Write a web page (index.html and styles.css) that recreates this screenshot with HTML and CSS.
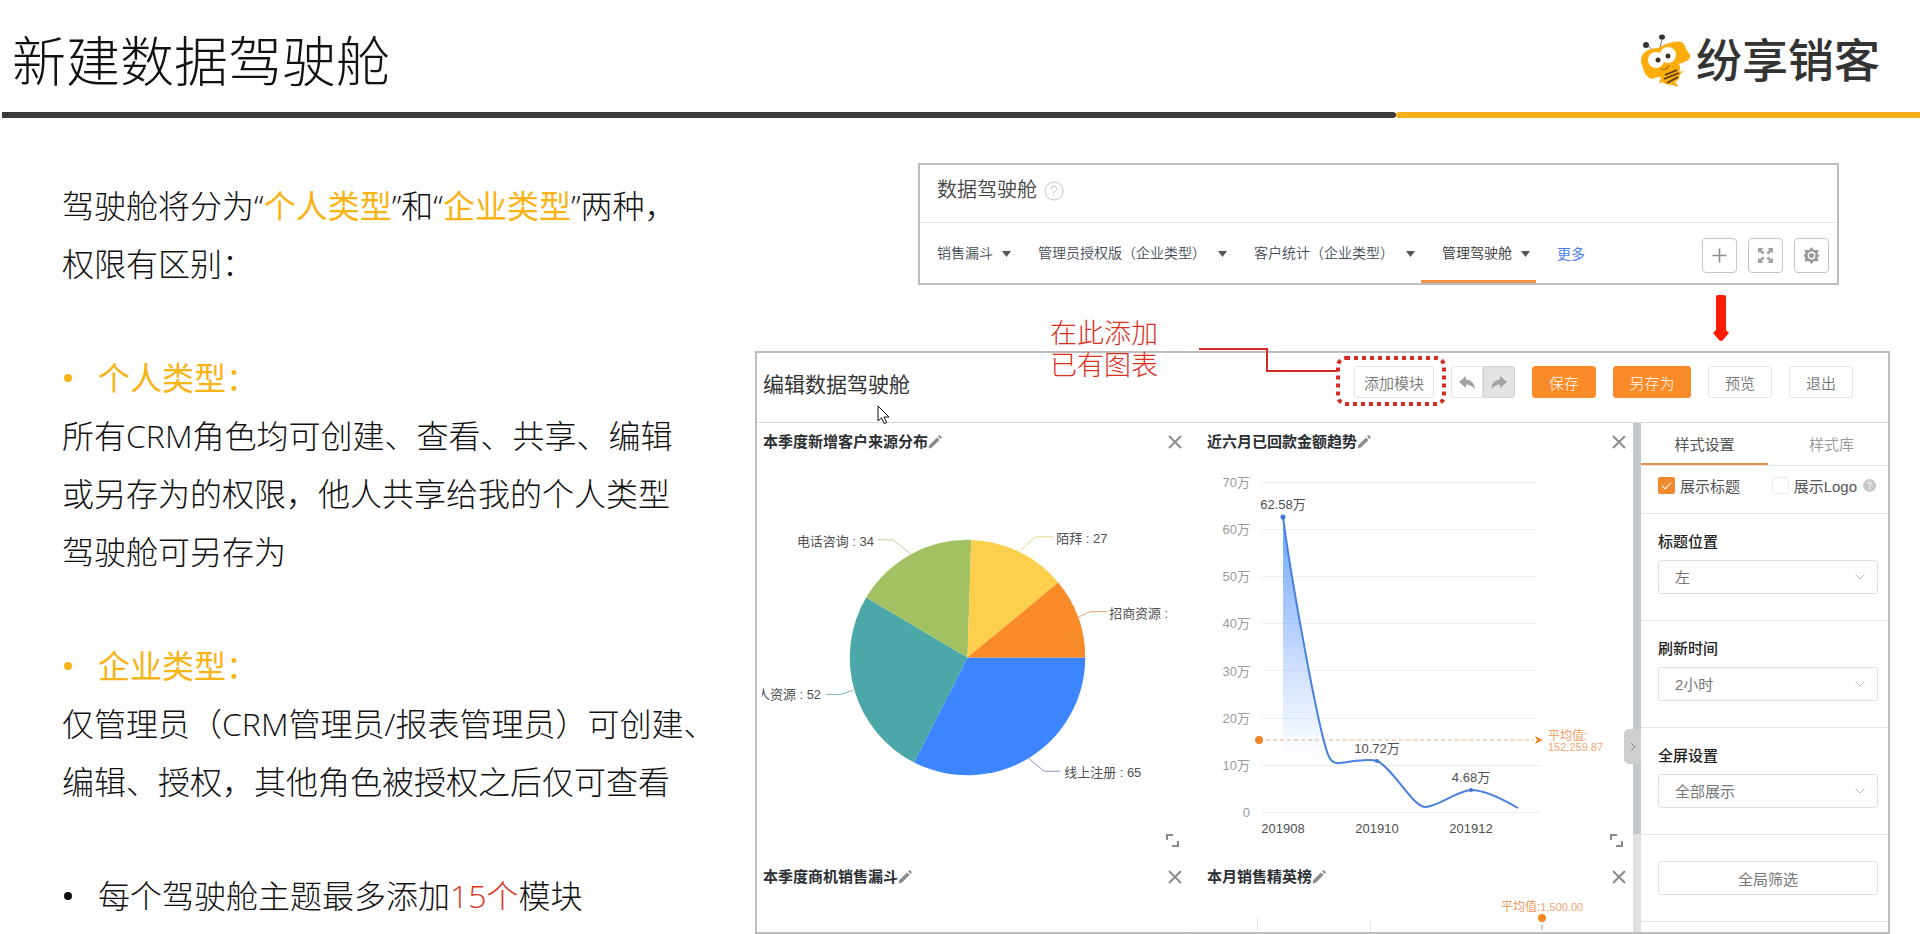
FILE: index.html
```html
<!DOCTYPE html>
<html lang="zh-CN">
<head>
<meta charset="utf-8">
<meta name="viewport" content="width=device-width, initial-scale=1">
<title>新建数据驾驶舱</title>
<link rel="stylesheet" href="styles.css">
</head>
<body>
<svg class="sprite" aria-hidden="true">
  <symbol id="pencil" viewBox="0 0 14 14"><path d="M0.5 13.5 1.4 10 9 2.4 11.6 5 4 12.6Z M10 1.4 11.2 0.3Q11.7 0 12.2 0.4L13.6 1.8Q14 2.3 13.6 2.8L12.6 4Z"/></symbol>
  <symbol id="close" viewBox="0 0 14 14"><path d="M1 1 13 13M13 1 1 13"/></symbol>
  <symbol id="resize" viewBox="0 0 13 13"><path d="M1 6V1H7M12 7V12H6"/></symbol>
  <symbol id="caret" viewBox="0 0 9 6"><path d="M0 0H9L4.5 6Z"/></symbol>
  <symbol id="chevron" viewBox="0 0 10 6"><path d="M0.5 0.5 5 5 9.5 0.5"/></symbol>
</svg>

<header class="slide-head">
  <h1>新建数据驾驶舱</h1>
  <div class="brand">
    <svg class="bee" viewBox="0 0 50 54" aria-hidden="true">
      <path d="M7 12 13 17M21 5 19 14" fill="none" stroke="#777" stroke-width="1"/>
      <ellipse cx="5" cy="11" rx="3" ry="3" fill="#333"/>
      <ellipse cx="21" cy="3" rx="3" ry="2.6" fill="#333"/>
      <path d="M4 18Q10 14 17 14Q27 8 37 7.500Q41 7 43 10Q45 16 49 21Q50 24 46 27L38 30Q40 34 38 38L43 37 39 40 38 45Q35 47 34 49L37 51 36 53 32 51Q25 51 21 48L18 50 20 43Q14 43 11 45Q5 43 3 37L0 28Q0 21 4 18Z" fill="#fcac0b"/>
      <circle cx="15" cy="26" r="8" fill="#fff"/>
      <circle cx="27" cy="21" r="8" fill="#fff"/>
      <circle cx="17" cy="26" r="2.500" fill="#3a2f22"/>
      <circle cx="27" cy="22" r="2.500" fill="#3a2f22"/>
      <path d="M20 35Q25 37 28 31" fill="none" stroke="#a86a12" stroke-width="1.200"/>
      <path d="M24 41 36 36M23 45 38 39M26 49 37 43" stroke="#5a3a0c" stroke-width="1.800"/>
    </svg>
    <span>纷享销客</span>
  </div>
</header>
<div class="rule"><span></span><span></span></div>

<main class="slide">
  <section class="notes">
    <p>驾驶舱将分为“<b>个人类型</b>”和“<b>企业类型</b>”两种，<br>权限有区别：</p>
    <div>
      <ul class="gold"><li>个人类型：</li></ul>
      <p>所有CRM角色均可创建、查看、共享、编辑<br>或另存为的权限，他人共享给我的个人类型<br>驾驶舱可另存为</p>
    </div>
    <div>
      <ul class="gold"><li>企业类型：</li></ul>
      <p>仅管理员（CRM管理员/报表管理员）可创建、<br>编辑、授权，其他角色被授权之后仅可查看</p>
    </div>
    <ul><li>每个驾驶舱主题最多添加<em>15个</em>模块</li></ul>
  </section>

  <div class="shots">
    <section class="cockpit">
      <div class="cockpit-head">
        <h2>数据驾驶舱</h2>
        <svg class="help" viewBox="0 0 20 20" aria-hidden="true"><circle cx="10" cy="10" r="9"/><path d="M7.300 8Q7.300 5.300 10 5.300T12.700 7.800Q12.700 9.200 11.200 10Q10 10.600 10 12M10 13.500V15"/></svg>
      </div>
      <div class="cockpit-bar">
        <nav class="tabs">
          <button type="button">销售漏斗<svg class="caret"><use href="#caret"/></svg></button>
          <button type="button" class="typed">管理员授权版（企业类型）<svg class="caret"><use href="#caret"/></svg></button>
          <button type="button" class="typed">客户统计（企业类型）<svg class="caret"><use href="#caret"/></svg></button>
          <button type="button" class="on">管理驾驶舱<svg class="caret"><use href="#caret"/></svg></button>
          <a href="#more">更多</a>
        </nav>
        <div class="tools">
          <button type="button" aria-label="添加"><svg viewBox="0 0 18 18"><path d="M9 1.500V16.500M1.500 9H16.500" fill="none" stroke="#8d8d8d" stroke-width="1.700"/></svg></button>
          <button type="button" aria-label="全屏"><svg viewBox="0 0 18 18"><path d="M1 1H7L5 3 8 6 6 8 3 5 1 7ZM17 1V7L15 5 12 8 10 6 13 3 11 1ZM1 17V11L3 13 6 10 8 12 5 15 7 17ZM17 17H11L13 15 10 12 12 10 15 13 17 11Z" fill="#a2a2a2"/></svg></button>
          <button type="button" aria-label="设置"><svg viewBox="0 0 18 18"><path d="M9 0 11.500 3.200H16.500L15.300 7 17.500 9.200 15.300 11.500 16.500 15H11.500L9 18 6.500 15H1.500L2.700 11.500 0.500 9.200 2.700 7 1.500 3.200H6.500Z" fill="#999"/><circle cx="9" cy="9" r="3.400" fill="none" stroke="#fff" stroke-width="1.500"/></svg></button>
        </div>
      </div>
    </section>

    <svg class="arrow" viewBox="0 0 16 46" aria-hidden="true"><path d="M3 2Q3 0 5 0H11Q13 0 13 2V35L16 38 10 45Q8 47 6 45L0 38 3 35Z" fill="#fb1c05"/></svg>

    <section class="editor">
      <div class="editor-head">
        <h2>编辑数据驾驶舱</h2>
        <svg class="pointer" viewBox="0 0 13 20" aria-hidden="true"><path d="M1 1V16L4.500 12.800 7.200 18.700 9.600 17.600 7 12H12Z" fill="#fff" stroke="#111" stroke-width="1"/></svg>
        <div class="actions">
          <div class="marked">
            <button type="button" class="add">添加模块</button>
            <p class="callout">在此添加<br>已有图表</p>
            <svg class="marker" viewBox="0 0 247 58" aria-hidden="true">
              <path d="M0 1H68V23H138" stroke-width="2"/>
              <rect x="139" y="10" width="106" height="46" rx="8" stroke-width="4" stroke-dasharray="4 4"/>
            </svg>
          </div>
          <div class="history">
            <button type="button" aria-label="撤销"><svg viewBox="0 0 16 13"><path d="M0 6 7 0V3.500Q15 4 16 13Q12 8.500 7 8.500V12Z"/></svg></button>
            <button type="button" aria-label="重做"><svg viewBox="0 0 16 13"><path d="M16 6 9 0V3.500Q1 4 0 13Q4 8.500 9 8.500V12Z"/></svg></button>
          </div>
          <button type="button" class="primary">保存</button>
          <button type="button" class="primary wide">另存为</button>
          <button type="button">预览</button>
          <button type="button">退出</button>
        </div>
      </div>

      <div class="editor-body">
        <div class="tiles">
          <article class="tile">
            <header><h3>本季度新增客户来源分布</h3><svg class="pencil"><use href="#pencil"/></svg><button type="button" aria-label="关闭"><svg><use href="#close"/></svg></button></header>
            <svg class="chart" viewBox="0 0 433 397" role="img" aria-label="本季度新增客户来源分布">
              <path d="M211 197L329 197A118 118 0 0 1 157.400 302.100Z" fill="#3d85fe"/>
              <path d="M211 197L157.400 302.100A118 118 0 0 1 109.400 136.900Z" fill="#4ba7a8"/>
              <path d="M211 197L109.400 136.900A118 118 0 0 1 214.700 79.100Z" fill="#a1c162"/>
              <path d="M211 197L214.700 79.100A118 118 0 0 1 301.900 121.800Z" fill="#fccf4d"/>
              <path d="M211 197L301.900 121.800A118 118 0 0 1 329 197Z" fill="#f88a28"/>
              <g fill="none">
                <path d="M121 79H136L154 93" stroke="#b9cf90"/>
                <path d="M264 90 279 76H297" stroke="#e8d591"/>
                <path d="M321 157 334 151H351" stroke="#dba274"/>
                <path d="M69 234H84L96 230" stroke="#7cbabb"/>
                <path d="M272 298 288 311H304" stroke="#8793c4"/>
              </g>
              <clipPath id="edge"><rect x="5" y="220" width="70" height="30"/></clipPath>
              <g class="label">
                <text x="40" y="85">电话咨询 : 34</text>
                <text x="300" y="82">陌拜 : 27</text>
                <text x="353" y="157">招商资源 :</text>
                <text x="0" y="239" clip-path="url(#edge)">人资源 : 52</text>
                <text x="308" y="317">线上注册 : 65</text>
              </g>
            </svg>
            <svg class="resize"><use href="#resize"/></svg>
          </article>

          <article class="tile">
            <header><h3>近六月已回款金额趋势</h3><svg class="pencil"><use href="#pencil"/></svg><button type="button" aria-label="关闭"><svg><use href="#close"/></svg></button></header>
            <svg class="chart" viewBox="0 0 443 397" role="img" aria-label="近六月已回款金额趋势">
              <linearGradient id="fade" x1="0" y1="56" x2="0" y2="351" gradientUnits="userSpaceOnUse">
                <stop offset="0" stop-color="#5a9bfb" stop-opacity="0.900"/>
                <stop offset="0.350" stop-color="#84b1fb" stop-opacity="0.650"/>
                <stop offset="0.700" stop-color="#b9d3fa" stop-opacity="0.300"/>
                <stop offset="0.850" stop-color="#eaf2fd" stop-opacity="0"/>
              </linearGradient>
              <path d="M72 21.500H346M72 68.500H346M72 115.500H346M72 162.500H346M72 209.500H346M72 257.500H346M72 304.500H351M72 351.500H351" stroke="#ededee"/>
              <path d="M93 56C100 110 124 245 135 284C139 300 143 303 150 302V351H93Z" fill="url(#fade)"/>
              <path d="M69 279H344" stroke="#e9b181" stroke-dasharray="4 3"/>
              <circle cx="69" cy="279" r="4" fill="#f08629"/>
              <path d="M345 275 353 279 345 283 347 279Z" fill="#f08629"/>
              <path d="M93 56C100 110 124 245 135 284C139 300 143 303 150 302C162 301 176 297 187 300C202 306 222 345 235 346C248 346 266 330 281 329C295 329 316 340 328 347" fill="none" stroke="#4a80e0" stroke-width="2"/>
              <g fill="#3e76de"><circle cx="93" cy="56" r="2.500"/><circle cx="187" cy="300" r="2"/><circle cx="281" cy="329" r="2"/></g>
              <g class="axis">
                <text x="60" y="26">70万</text><text x="60" y="73">60万</text><text x="60" y="120">50万</text><text x="60" y="167">40万</text>
                <text x="60" y="215">30万</text><text x="60" y="262">20万</text><text x="60" y="309">10万</text><text x="60" y="356">0</text>
              </g>
              <g class="label mid">
                <text x="93" y="48">62.58万</text><text x="187" y="292">10.72万</text><text x="281" y="321">4.68万</text>
                <text x="93" y="372">201908</text><text x="187" y="372">201910</text><text x="281" y="372">201912</text>
              </g>
              <g class="avg"><text x="358" y="279">平均值:</text><text x="358" y="290" class="num">152,259.87</text></g>
            </svg>
            <svg class="resize"><use href="#resize"/></svg>
          </article>

          <article class="tile">
            <header><h3>本季度商机销售漏斗</h3><svg class="pencil"><use href="#pencil"/></svg><button type="button" aria-label="关闭"><svg><use href="#close"/></svg></button></header>
          </article>

          <article class="tile">
            <header><h3>本月销售精英榜</h3><svg class="pencil"><use href="#pencil"/></svg><button type="button" aria-label="关闭"><svg><use href="#close"/></svg></button></header>
            <svg class="chart" viewBox="0 0 443 36" role="img" aria-label="本月销售精英榜">
              <path d="M67.500 22V35M180.500 26V35" stroke="#e4e4e4"/>
              <path d="M352 29V36" stroke="#999" stroke-dasharray="5 2"/>
              <circle cx="352" cy="22" r="4" fill="#f08629"/>
              <g class="avg"><text x="311" y="15">平均值:<tspan class="num">1,500.00</tspan></text></g>
            </svg>
          </article>
        </div>

        <div class="gutter">
          <button type="button" class="fold" aria-label="收起"><svg viewBox="0 0 6 10"><path d="M1 1 5 5 1 9"/></svg></button>
        </div>

        <aside class="settings">
          <div class="settings-tabs"><button type="button" class="on">样式设置</button><button type="button">样式库</button></div>
          <div class="checks">
            <label><input type="checkbox" checked>展示标题</label>
            <label><input type="checkbox">展示Logo</label>
            <svg class="hint" viewBox="0 0 13 13" aria-hidden="true"><circle cx="6.500" cy="6.500" r="6.500" fill="#c9c9c9"/><path d="M4.700 5Q4.800 3.300 6.500 3.300T8.200 5Q8.200 6 6.500 7V8M6.500 9V10" fill="none" stroke="#fff"/></svg>
          </div>
          <div class="field">
            <label for="pos">标题位置</label>
            <div class="pick"><select id="pos"><option>左</option></select><svg><use href="#chevron"/></svg></div>
          </div>
          <div class="field">
            <label for="refresh">刷新时间</label>
            <div class="pick"><select id="refresh"><option>2小时</option></select><svg><use href="#chevron"/></svg></div>
          </div>
          <div class="field">
            <label for="full">全屏设置</label>
            <div class="pick"><select id="full"><option>全部展示</option></select><svg><use href="#chevron"/></svg></div>
          </div>
          <div class="filter"><button type="button">全局筛选</button></div>
        </aside>
      </div>
    </section>
  </div>
</main>
</body>
</html>
```
FILE: styles.css
```css
* { box-sizing: border-box; }

body {
  margin: 0;
  min-height: 100vh;
  display: flex;
  flex-direction: column;
  background: #fefefe;
  color: #111;
  font-family: "Liberation Sans", "Noto Sans CJK SC", sans-serif;
}

h1, h2, h3, p, ul { margin: 0; padding: 0; }
h2 { font-weight: 400; }
button, select, input { font: inherit; margin: 0; }
button { padding: 0; background: #fff; border: 0; cursor: pointer; }
svg { display: block; }
.sprite { position: absolute; width: 0; height: 0; }

/* Slide heading */
.slide-head {
  display: flex;
  justify-content: space-between;
  align-items: center;
  height: 112px;
  padding: 10px 40px 0 12px;
}
.slide-head h1 {
  font: 300 54px/72px "Open Sans", "Noto Sans CJK SC", sans-serif;
}
.brand {
  display: flex;
  align-items: center;
  gap: 5px;
  color: #333;
  font-size: 46px;
  font-weight: 500;
  line-height: 54px;
}
.bee { width: 50px; height: 54px; }

.rule {
  display: grid;
  grid-template-columns: 1394fr 524fr;
  padding-left: 2px;
}
.rule span { height: 6px; background: #3a3c3a; border-radius: 0 3px 3px 0; }
.rule span + span { background: #f5b017; border-radius: 3px 0 0 3px; }

.slide {
  flex: 1;
  display: grid;
  grid-template-columns: minmax(0, 755fr) minmax(0, 1135fr);
  padding-right: 30px;
}

/* Left column */
.notes {
  display: flex;
  flex-direction: column;
  gap: 56px;
  padding: 59px 0 0 62px;
  font: 300 32px/58px "Open Sans", "Noto Sans CJK SC", sans-serif;
  white-space: nowrap;
}
.notes b { font-weight: 400; color: #f8b314; }
.notes em { font-style: normal; color: #dd3628; }
.notes ul { list-style: none; }
.notes li { display: flex; align-items: center; }
.notes li::before {
  content: "";
  width: 8px;
  height: 8px;
  margin: 0 26px 0 2px;
  border-radius: 50%;
  background: currentColor;
}
.notes .gold { color: #f8b314; font-weight: 400; }

/* Right column */
.shots { display: flex; flex-direction: column; padding-top: 45px; }

.cockpit {
  margin: 0 51px 0 163px;
  border: 2px solid #bdbdbd;
  background: #fff;
}
.cockpit-head {
  display: flex;
  gap: 7px;
  padding: 11px 17px 18px;
  border-bottom: 1px solid #e6e6e6;
}
.cockpit-head h2 { font-size: 20px; line-height: 28px; color: #444; font-weight: 350; }
.help { width: 20px; height: 20px; margin-top: 5px; fill: none; stroke: #c4c4c4; }
.cockpit-bar {
  display: flex;
  justify-content: space-between;
  height: 60px;
  padding-right: 8px;
}
.tabs { display: flex; }
.tabs button {
  display: flex;
  align-items: center;
  gap: 9px;
  padding: 0 6px 0 21px;
  border-bottom: 3px solid transparent;
  color: #444b55;
  font-size: 14px;
  font-weight: 350;
  white-space: nowrap;
}
.tabs button:first-child { padding-left: 17px; }
.tabs .typed { gap: 12px; }
.tabs .on { border-color: #f0944a; color: #333; }
.tabs a { padding: 4px 21px 0; color: #4a7de8; font-size: 14px; line-height: 54px; text-decoration: none; }
.caret { width: 9px; height: 6px; margin-top: 4px; fill: #555; }
.tools { display: flex; align-items: center; gap: 11px; padding-top: 4px; }
.tools button {
  display: grid;
  place-items: center;
  width: 35px;
  height: 35px;
  border: 1px solid #c4c6ca;
  border-radius: 4px;
}
.tools svg { width: 17px; height: 17px; }

.arrow { align-self: flex-end; width: 16px; height: 46px; margin: 10px 161px; }

/* Editor */
.editor {
  flex: 1;
  display: flex;
  flex-direction: column;
  border: 2px solid #bdbdbd;
  background: #fff;
}
.editor-head {
  position: relative;
  display: flex;
  justify-content: space-between;
  align-items: flex-end;
  padding: 13px 35px 24px 6px;
  border-bottom: 1px solid #dcdcdc;
}
.editor-head h2 { font-size: 21px; line-height: 26px; color: #333; }
.pointer { position: absolute; left: 120px; top: 52px; width: 13px; height: 20px; z-index: 2; }
.actions { display: flex; gap: 17px; }
.actions button {
  width: 64px;
  height: 32px;
  border: 1px solid #e3e5e7;
  border-radius: 3px;
  color: #777;
  font-size: 15px;
  font-weight: 350;
}
.actions .add { width: 80px; }
.actions .primary { background: #f88b28; border-color: #f88b28; color: #fff; font-weight: 300; }
.actions .wide { width: 78px; }
.history { display: flex; }
.history button {
  display: grid;
  place-items: center;
  width: 32px;
  border-radius: 3px 0 0 3px;
}
.history button + button { background: #e3e3e3; border-color: #d2d2d2; border-radius: 0 3px 3px 0; }
.history svg { width: 16px; height: 13px; fill: #a3a3a3; }
.marked { position: relative; }
.callout {
  position: absolute;
  right: 276px;
  top: -48px;
  color: #d9301f;
  font-size: 27px;
  font-weight: 300;
  line-height: 32px;
  white-space: nowrap;
}
.marker {
  position: absolute;
  right: -12px;
  top: -18px;
  width: 247px;
  height: 58px;
  fill: none;
  stroke: #d32c22;
  pointer-events: none;
}

.editor-body {
  flex: 1;
  display: grid;
  grid-template-columns: minmax(0, 1fr) 8px 247px;
}
.tiles {
  display: grid;
  grid-template-columns: minmax(0, 433fr) minmax(0, 443fr);
  grid-template-rows: auto 1fr;
}
.tile { position: relative; }
.tile:nth-child(odd) { border-right: 1px solid #f7f7f7; }
.tile header {
  display: flex;
  align-items: center;
  height: 38px;
  padding: 0 7px 0 6px;
}
.tile:nth-child(even) header { padding-left: 17px; }
.tile h3 { font-size: 15px; font-weight: 700; line-height: 22px; color: #2b2f33; }
.pencil { width: 14px; height: 14px; fill: #8c8c8c; }
.tile header button { width: 14px; height: 14px; margin-left: auto; }
.tile header button svg { width: 14px; height: 14px; fill: none; stroke: #8c8c8c; stroke-width: 2; }
.chart { width: 100%; height: auto; }
.resize {
  position: absolute;
  right: 10px;
  bottom: 11px;
  width: 13px;
  height: 13px;
  fill: none;
  stroke: #8a8a8a;
  stroke-width: 2;
}
.label { font-size: 13px; fill: #4f4f4f; }
.mid { text-anchor: middle; }
.axis { font-size: 13px; fill: #999; text-anchor: end; }
.avg { font-size: 12px; font-weight: 350; fill: #ee8f50; }
.num { font-size: 11px; fill: #f2a673; }

.gutter {
  position: relative;
  background: linear-gradient(#c3c8cd 411px, #dfe1e2 411px);
}
.fold {
  position: absolute;
  right: 0;
  top: 306px;
  display: grid;
  place-items: center;
  width: 17px;
  height: 35px;
  background: #cfcfd0;
  border-radius: 5px 0 0 5px;
}
.fold svg { width: 6px; height: 10px; fill: none; stroke: #888; stroke-width: 1; }

/* Settings */
.settings { font-size: 15px; color: #555; }
.settings-tabs {
  display: grid;
  grid-template-columns: 127fr 120fr;
  border-bottom: 1px solid #e6e6e6;
}
.settings-tabs button { height: 42px; border-bottom: 2px solid transparent; color: #999; }
.settings-tabs button + button { padding-left: 7px; font-weight: 350; }
.settings-tabs .on { border-color: #e8904a; color: #555; }
.checks {
  display: flex;
  align-items: center;
  height: 48px;
  padding: 0 12px 8px 17px;
  border-bottom: 1px solid #e3e6e8;
}
.checks label { display: flex; align-items: center; gap: 5px; }
.checks label + label { margin-left: auto; }
.checks input {
  appearance: none;
  display: grid;
  place-items: center;
  width: 17px;
  height: 17px;
  border: 1px solid #ececec;
  border-radius: 2px;
}
.checks input:checked { background: #f08a2c; border-color: #f08a2c; }
.checks input:checked::after {
  content: "";
  width: 8px;
  height: 4px;
  margin-bottom: 3px;
  border: solid #fff;
  border-width: 0 0 1px 1px;
  transform: rotate(-45deg);
}
.hint { width: 13px; height: 13px; margin-left: 6px; }
.field, .filter { padding: 17px 10px 26px 17px; border-bottom: 1px solid #e3e6e8; }
.field label { display: block; margin-bottom: 7px; font-weight: 500; line-height: 22px; color: #222; }
.pick { position: relative; }
.pick select {
  appearance: none;
  display: block;
  width: 100%;
  height: 34px;
  padding: 0 16px;
  border: 1px solid #dedfe1;
  border-radius: 3px;
  background: #fff;
  color: #777;
}
.pick svg {
  position: absolute;
  right: 13px;
  top: 14px;
  width: 10px;
  height: 6px;
  fill: none;
  stroke: #bbb;
  pointer-events: none;
}
.filter { padding-top: 26px; }
.filter button {
  display: block;
  width: 100%;
  height: 34px;
  border: 1px solid #dedfe1;
  border-radius: 3px;
  color: #777;
}
```
